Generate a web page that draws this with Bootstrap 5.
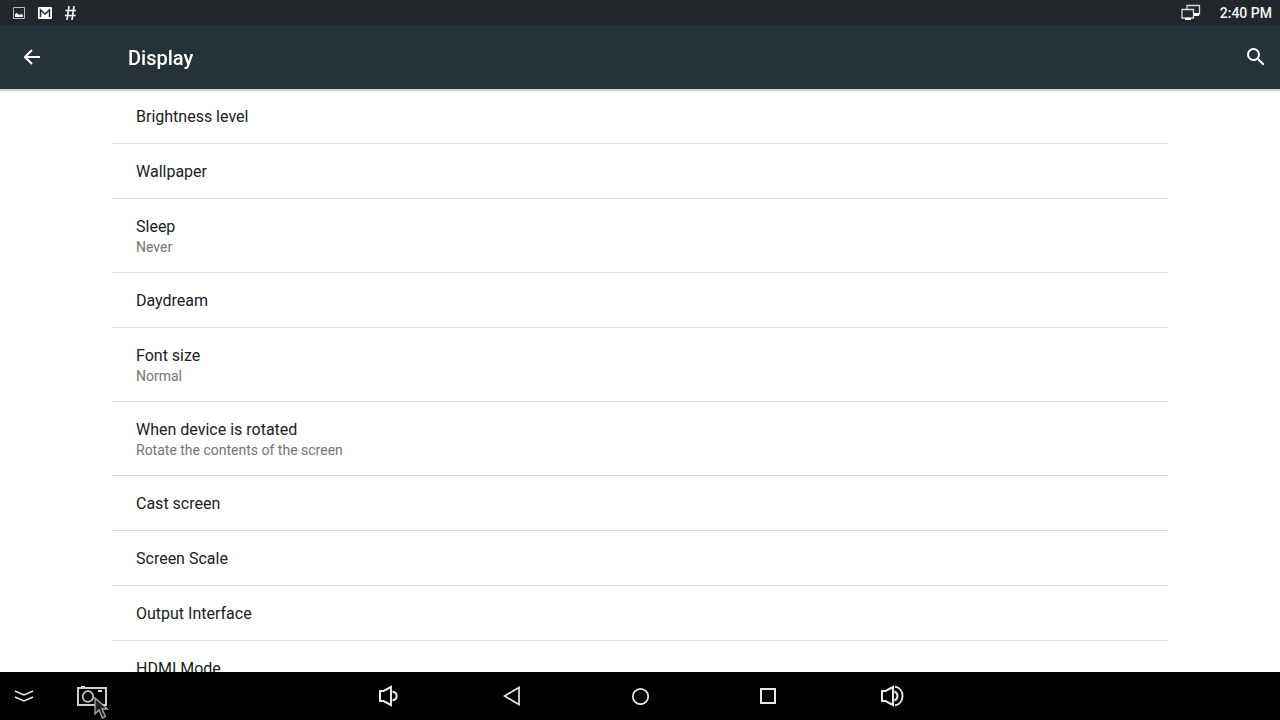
<!DOCTYPE html>
<html lang="en">
<head>
<meta charset="utf-8">
<meta name="viewport" content="width=device-width, initial-scale=1">
<title>Display</title>
<link href="https://cdn.jsdelivr.net/npm/bootstrap@5.3.0/dist/css/bootstrap.min.css" rel="stylesheet">
<style>
  body { font-family: Roboto, sans-serif; color: #212121; }
  svg { display: block; fill: none; stroke: currentColor; }
  .status-bar { height: 25px; background: #21272b; padding: 0 8px 0 12px; color: #f2f4f4; }
  .clock { font-size: 14px; line-height: 20px; font-weight: 500; }
  .app-bar { height: 64px; background: #263238; padding: 0 12px; box-shadow: 0 2px 0 #d2d4d5, 0 3px 0 #ececec; z-index: 1; }
  .app-bar h1 { font-size: 20px; line-height: 28px; font-weight: 500; margin-left: 76px; padding-top: 2px; }
  .app-bar .icon-button { width: 40px; height: 40px; }
  .app-bar .search-button { width: 24px; }
  .icon-button { background: none; border: 0; padding: 0; color: #fff; display: flex; align-items: center; justify-content: center; }
  .settings { overflow-y: auto; scrollbar-width: none; min-height: 0; }
  .settings::-webkit-scrollbar { display: none; }
  .settings .list-group { max-width: 1056px; --bs-list-group-bg: #fff; }
  .settings .list-group-item { padding: 17px 24px 15px; border-color: #dcdcdc; color: #212121; }
  .setting-name { font-size: 16px; line-height: 22px; }
  .setting-value { font-size: 14px; line-height: 19px; color: #757575; }
  .system-nav { height: 48px; background: #000; display: grid; grid-template-columns: 1fr auto 1fr; }
  .system-nav .icon-button { width: 48px; height: 48px; color: #e8e8e4; }
  .system-nav .key { width: 128px; }
  .system-nav .key-volume { width: 120px; }
  .tool-keys { gap: 20px; }
  .pointer { left: 26px; top: 24px; }
</style>
</head>
<body>
<div class="d-flex flex-column vh-100 overflow-hidden">
  <div class="status-bar d-flex align-items-center flex-shrink-0">
    <div class="d-flex align-items-center gap-2">
      <svg width="14" height="14" viewBox="0 0 14 14" aria-hidden="true"><path d="M1.500 1.500h11v11h-11z" stroke="#b9bec0"/><path d="M3 11V8l2-1 2 2 2-1 2 1v2z" fill="#fff" stroke="none"/></svg>
      <svg class="ms-1" width="14" height="14" viewBox="0 0 14 14" aria-hidden="true"><rect y="1" width="14" height="12" rx="1" fill="#fff" stroke="none"/><path d="M2.500 11V4L7 8l4.500-4v7" stroke="#21272b" stroke-width="1.500"/></svg>
      <svg class="ms-1" width="13" height="16" viewBox="0 0 13 16" aria-hidden="true"><path d="M5 1 3 15M10 1 8 15M1.500 5.500h10.500M1 10.500h10.500" stroke-width="1.700"/></svg>
    </div>
    <div class="d-flex align-items-center ms-auto">
      <svg class="me-3" width="23" height="18" viewBox="0 0 23 18" aria-hidden="true"><path d="M6 5V1.500h12.500v8.500H13M1 5.500h11.500v8.500H1z" stroke="#d5dada" stroke-width="1.300"/><path d="M13 9h5v3h-5zM4 14h6v2H4z" fill="#fff" stroke="none"/></svg>
      <span class="clock">2:40 PM</span>
    </div>
  </div>

  <header class="app-bar d-flex align-items-center flex-shrink-0 text-white">
    <button type="button" class="icon-button" aria-label="Back"><svg width="16" height="16" viewBox="0 0 16 16"><path d="M16 8H1.500M8 1 1 8l7 7" stroke-width="2"/></svg></button>
    <h1 class="mb-0">Display</h1>
    <button type="button" class="icon-button search-button ms-auto" aria-label="Search"><svg width="24" height="24" viewBox="0 0 24 24"><path d="M15.500 14h-.79l-.28-.27A6.470 6.470 0 0 0 16 9.500 6.500 6.500 0 1 0 9.500 16c1.610 0 3.090-.59 4.230-1.570l.27.28v.79l5 4.990L20.490 19zm-6 0A4.500 4.500 0 1 1 14 9.500 4.490 4.490 0 0 1 9.500 14z" fill="currentColor" stroke="none"/></svg></button>
  </header>

  <main class="settings flex-grow-1 bg-white">
    <div class="list-group list-group-flush mx-auto">
      <a href="#" class="list-group-item list-group-item-action"><div class="setting-name">Brightness level</div></a>
      <a href="#" class="list-group-item list-group-item-action"><div class="setting-name">Wallpaper</div></a>
      <a href="#" class="list-group-item list-group-item-action"><div class="setting-name">Sleep</div><div class="setting-value">Never</div></a>
      <a href="#" class="list-group-item list-group-item-action"><div class="setting-name">Daydream</div></a>
      <a href="#" class="list-group-item list-group-item-action"><div class="setting-name">Font size</div><div class="setting-value">Normal</div></a>
      <a href="#" class="list-group-item list-group-item-action"><div class="setting-name">When device is rotated</div><div class="setting-value">Rotate the contents of the screen</div></a>
      <a href="#" class="list-group-item list-group-item-action"><div class="setting-name">Cast screen</div></a>
      <a href="#" class="list-group-item list-group-item-action"><div class="setting-name">Screen Scale</div></a>
      <a href="#" class="list-group-item list-group-item-action"><div class="setting-name">Output Interface</div></a>
      <a href="#" class="list-group-item list-group-item-action"><div class="setting-name">HDMI Mode</div></a>
    </div>
  </main>

  <nav class="system-nav flex-shrink-0" aria-label="System">
    <div class="tool-keys d-flex">
      <button type="button" class="icon-button" aria-label="Hide bar"><svg width="20" height="16" viewBox="0 0 20 16"><path d="m1 3 9 4 9-4M1 9l9 4 9-4" stroke-width="1.500"/></svg></button>
      <div class="position-relative">
        <button type="button" class="icon-button" aria-label="Screenshot"><svg width="30" height="22" viewBox="0 0 30 22"><path d="M1 3h28v17H1z" stroke="#cfcfcb" stroke-width="2"/><circle cx="11" cy="11.500" r="5.300" stroke="#cfcfcb" stroke-width="1.700"/><path d="M4 1h4v1H4zM21 5h4v2h-4z" fill="#e4e4e0" stroke="none"/></svg></button>
        <svg class="pointer position-absolute pe-none" width="16" height="24" viewBox="0 0 16 24" aria-hidden="true"><path d="M1 2v16l4-4 3.500 8 3-1.500L8 13h5.500z" fill="#222" stroke="#aaa" stroke-width="1.300"/></svg>
      </div>
    </div>
    <div class="d-flex">
      <button type="button" class="icon-button key-volume" aria-label="Volume down"><svg width="20" height="22" viewBox="0 0 20 22"><path d="M2 6h3.500L13 2v18l-7.500-4H2zM14.500 6.500c5.500 1 5.500 8 0 9" stroke-width="2"/></svg></button>
      <button type="button" class="icon-button key" aria-label="Back"><svg width="18" height="20" viewBox="0 0 18 20"><path d="M16 1.500v17L1.500 10z" stroke-width="1.700"/></svg></button>
      <button type="button" class="icon-button key" aria-label="Home"><svg width="18" height="18" viewBox="0 0 18 18"><circle cx="9.500" cy="9.500" r="7.700" stroke-width="1.700"/></svg></button>
      <button type="button" class="icon-button key" aria-label="Recent apps"><svg width="16" height="16" viewBox="0 0 16 16"><path d="M1 1h14v14H1z" stroke-width="2"/></svg></button>
      <button type="button" class="icon-button key-volume" aria-label="Volume up"><svg width="24" height="22" viewBox="0 0 24 22"><path d="M2 6h3.500L13 2v18l-7.500-4H2zM14.500 6.500c4 2 4 7 0 9M15 1.500c10 2 10 17 0 19" stroke-width="2"/></svg></button>
    </div>
  </nav>
</div>
<script src="https://cdn.jsdelivr.net/npm/bootstrap@5.3.0/dist/js/bootstrap.bundle.min.js"></script>
</body>
</html>
